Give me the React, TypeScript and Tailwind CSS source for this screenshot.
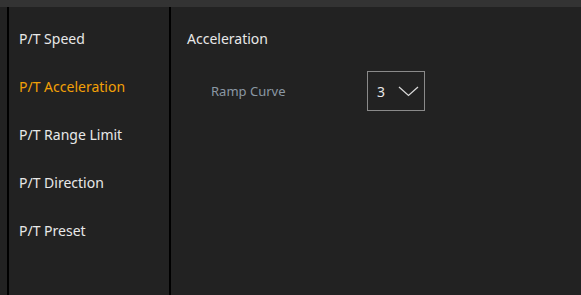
import React from "react";

const items = ["P/T Speed", "P/T Acceleration", "P/T Range Limit", "P/T Direction", "P/T Preset"];

export default function App() {
  return (
    <div className="w-[581px] h-[295px] bg-[#222222] flex flex-col overflow-hidden" style={{ fontFamily: '"Noto Sans", sans-serif' }}>
      <div className="h-[7px] bg-[#333333] shrink-0" />
      <div className="flex flex-1 min-h-0">
        <div className="w-[7px] shrink-0" />
        <div className="w-[2px] bg-black shrink-0" />
        <div className="w-[160px] shrink-0 flex flex-col pt-[21px] pl-[10px]">
          {items.map((t, i) => (
            <div key={t} className={`h-[48px] text-[14px] leading-[22px] ${i === 1 ? "text-[#f2a007]" : "text-[#e8e8e8]"}`}>{t}</div>
          ))}
        </div>
        <div className="w-[2px] bg-black shrink-0" />
        <div className="flex-1 pl-[16px] pt-[21px]">
          <div className="text-[14px] leading-[22px] text-[#e8e8e8]">Acceleration</div>
          <div className="flex items-center mt-[21px]">
            <div className="w-[180px] pl-[24px] pt-[2px] text-[13px] text-[#8b98a4]">Ramp Curve</div>
            <div className="w-[58px] h-[40px] border border-[#8a8a8a] flex items-center justify-between pl-[9px] pr-[5px]">
              <span className="text-[14px] text-[#e8e8e8]">3</span>
              <svg width="21" height="12" viewBox="0 0 21 12" fill="none">
                <path d="M1 2 L10.5 10.5 L20 2" stroke="#d8d8d8" strokeWidth="1.3" />
              </svg>
            </div>
          </div>
        </div>
      </div>
    </div>
  );
}
